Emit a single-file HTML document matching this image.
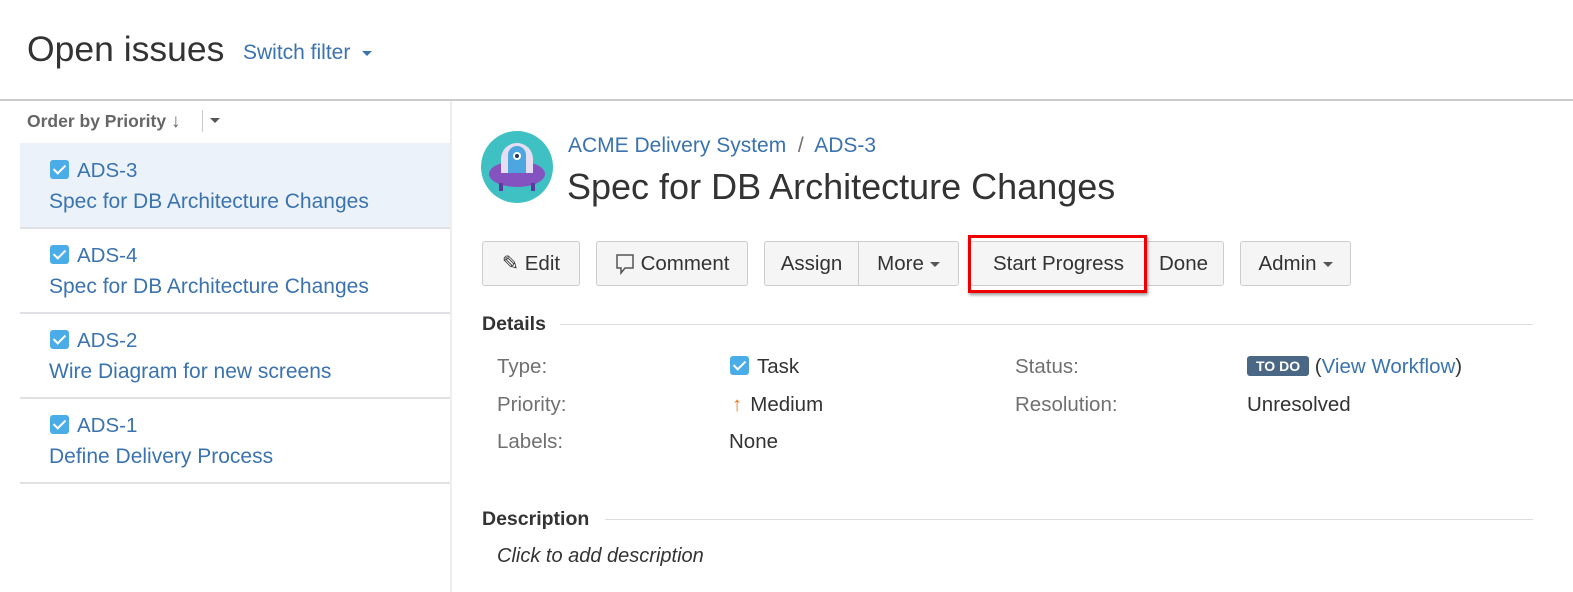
<!DOCTYPE html>
<html><head><style>
body{margin:0;width:1573px;height:592px;background:#fff;font-family:"Liberation Sans",sans-serif;position:relative;overflow:hidden;color:#333}
.a{position:absolute;white-space:nowrap}
.lnk{color:#3b73af}
.item{position:absolute;left:20px;width:430px;height:84px;border-bottom:2px solid #dfe1e5}
.item .k{position:absolute;left:30px;top:16px;font-size:20.5px;color:#3b73af}
.item .t{position:absolute;left:29px;top:47px;font-size:21px;color:#3b73af}
.cb{display:inline-block;width:19px;height:19px;background:#4bade8;border-radius:3px;vertical-align:-2px;margin-right:8px;position:relative}
.cb:after{content:"";position:absolute;left:6px;top:2px;width:5px;height:10px;border:solid #fff;border-width:0 2.5px 2.5px 0;transform:rotate(45deg)}
.btn{position:absolute;top:241px;height:43px;border:1px solid #ccc;background:#f5f5f5;border-radius:3px;font-size:20.5px;line-height:43px;text-align:center;box-sizing:content-box}
.caret{display:inline-block;border-left:5px solid transparent;border-right:5px solid transparent;border-top:5px solid #555;vertical-align:middle;margin-left:6px}
.lab{position:absolute;font-size:20.5px;color:#707070}
.val{position:absolute;font-size:20.5px;color:#333}
</style></head><body>
<div class="a" style="left:27px;top:29px;font-size:35.5px;color:#333">Open issues</div>
<div class="a lnk" style="left:243px;top:41px;font-size:21px">Switch filter <span class="caret" style="border-top-color:#3b73af"></span></div>
<div class="a" style="left:0;top:99px;width:1573px;height:2px;background:#ccc"></div>
<div class="a" style="left:450px;top:101px;width:2px;height:491px;background:#eee"></div>
<div class="a" style="left:27px;top:111px;font-size:17.5px;font-weight:bold;color:#666">Order by Priority <span style="font-size:19px">↓</span></div>
<div class="a" style="left:202px;top:110px;width:1px;height:22px;background:#ccc"></div>
<div class="a" style="left:210px;top:112px"><span class="caret" style="margin:0"></span></div>
<div class="item" style="top:143px;background:#ebf2f9"><div class="k"><span class="cb"></span>ADS-3</div><div class="t">Spec for DB Architecture Changes</div></div>
<div class="item" style="top:228px"><div class="k"><span class="cb"></span>ADS-4</div><div class="t">Spec for DB Architecture Changes</div></div>
<div class="item" style="top:313px"><div class="k"><span class="cb"></span>ADS-2</div><div class="t">Wire Diagram for new screens</div></div>
<div class="item" style="top:398px"><div class="k"><span class="cb"></span>ADS-1</div><div class="t">Define Delivery Process</div></div>
<svg class="a" style="left:481px;top:131px" width="72" height="72" viewBox="0 0 72 72">
<circle cx="36" cy="36" r="36" fill="#3fc1c4"/>
<ellipse cx="36" cy="43" rx="28" ry="13" fill="#8553c0"/>
<rect x="18" y="52" width="4" height="8" fill="#5a3a9a"/><rect x="50" y="52" width="4" height="8" fill="#5a3a9a"/>
<path d="M20 42 V28 a16 16 0 0 1 32 0 V42 Z" fill="#e6ddf2"/>
<path d="M27 42 V24 a9 9 0 0 1 18 0 V42 Z" fill="#4ea6e0"/>
<circle cx="36" cy="25" r="4" fill="#fff"/><circle cx="36" cy="25" r="2" fill="#253858"/>
</svg>
<div class="a lnk" style="left:568px;top:134px;font-size:21px">ACME Delivery System <span style="color:#707070">&nbsp;/&nbsp;</span> ADS-3</div>
<div class="a" style="left:567px;top:166px;font-size:36px;color:#333">Spec for DB Architecture Changes</div>
<div class="btn" style="left:482px;width:96px">✎ Edit</div>
<div class="btn" style="left:596px;width:150px"><svg width="20" height="22" viewBox="0 0 20 22" style="vertical-align:-5px;margin-right:6px"><path d="M2 2h16v13H10l-4 5v-5H2z" fill="none" stroke="#555" stroke-width="1.5"/></svg>Comment</div>
<div class="btn" style="left:764px;width:193px;text-align:left"><span style="display:inline-block;width:93px;text-align:center;border-right:1px solid #ccc">Assign</span><span style="display:inline-block;width:99px;text-align:center">More<span class="caret"></span></span></div>
<div class="btn" style="left:970px;width:252px;text-align:left"><span style="display:inline-block;width:175px;text-align:center">Start Progress</span><span style="display:inline-block;width:75px;text-align:center">Done</span></div>
<div class="a" style="left:968px;top:235px;width:173px;height:52px;border:3px solid #e00;box-shadow:1px 2px 3px rgba(0,0,0,.4)"></div>
<div class="btn" style="left:1240px;width:109px">Admin<span class="caret"></span></div>
<div class="a" style="left:482px;top:313px;font-size:19.5px;font-weight:bold;color:#333">Details</div>
<div class="a" style="left:560px;top:324px;width:973px;height:1px;background:#ddd"></div>
<div class="lab" style="left:497px;top:355px">Type:</div>
<div class="lab" style="left:497px;top:393px">Priority:</div>
<div class="lab" style="left:497px;top:430px">Labels:</div>
<div class="val" style="left:730px;top:355px"><span class="cb"></span>Task</div>
<div class="val" style="left:732px;top:393px"><span style="color:#f07b1c;font-weight:bold;margin-right:8px">↑</span>Medium</div>
<div class="val" style="left:729px;top:430px">None</div>
<div class="lab" style="left:1015px;top:355px">Status:</div>
<div class="lab" style="left:1015px;top:393px">Resolution:</div>
<div class="val" style="left:1247px;top:355px"><span style="display:inline-block;background:#4a6785;color:#fff;font-size:14px;font-weight:bold;padding:2px 9px;border-radius:3px;vertical-align:2px">TO DO</span> (<span class="lnk">View Workflow</span>)</div>
<div class="val" style="left:1247px;top:393px">Unresolved</div>
<div class="a" style="left:482px;top:508px;font-size:19.5px;font-weight:bold;color:#333">Description</div>
<div class="a" style="left:605px;top:519px;width:928px;height:1px;background:#ddd"></div>
<div class="a" style="left:497px;top:545px;font-size:20px;font-style:italic;color:#333">Click to add description</div>
</body></html>
